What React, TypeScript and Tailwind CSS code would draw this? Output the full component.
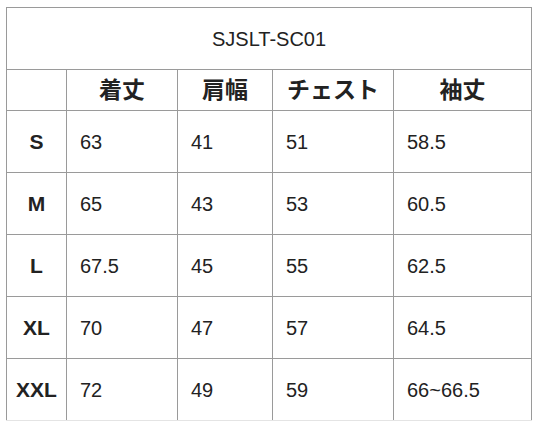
import React from "react";

const rows = [
  ["S", "63", "41", "51", "58.5"],
  ["M", "65", "43", "53", "60.5"],
  ["L", "67.5", "45", "55", "62.5"],
  ["XL", "70", "47", "57", "64.5"],
  ["XXL", "72", "49", "59", "66~66.5"],
];

export default function App() {
  const font = { fontFamily: '"Liberation Sans", "Noto Sans CJK JP", Arial, sans-serif' };
  return (
    <div className="w-[540px] h-[425px] bg-white pl-[6px] pt-[7px]" style={font}>
      <table className="border-collapse table-fixed w-[525px] text-[#222]">
        <colgroup>
          <col className="w-[60px]" />
          <col className="w-[111px]" />
          <col className="w-[95px]" />
          <col className="w-[121px]" />
          <col className="w-[138px]" />
        </colgroup>
        <tbody>
          <tr className="h-[62px]">
            <td colSpan={5} className="border border-[#9a9a9a] text-center text-[20px] align-middle">
              SJSLT-SC01
            </td>
          </tr>
          <tr className="h-[41px]">
            <td className="border border-[#9a9a9a]"></td>
            {["着丈", "肩幅", "チェスト", "袖丈"].map((h) => (
              <td key={h} className="border border-[#9a9a9a] text-center font-bold text-[23px] align-middle">
                {h}
              </td>
            ))}
          </tr>
          {rows.map((r, i) => (
            <tr key={r[0]} className="h-[62px]">
              <td
                className={`border border-[#9a9a9a] text-center font-bold text-[21px] align-middle ${
                  i === rows.length - 1 ? "border-b-[#e4e4e4]" : ""
                }`}
              >
                {r[0]}
              </td>
              {r.slice(1).map((v, j) => (
                <td
                  key={j}
                  className={`border border-[#9a9a9a] text-left pl-[13px] text-[20px] align-middle ${
                    i === rows.length - 1 ? "border-b-[#e4e4e4]" : ""
                  }`}
                >
                  {v}
                </td>
              ))}
            </tr>
          ))}
        </tbody>
      </table>
    </div>
  );
}
